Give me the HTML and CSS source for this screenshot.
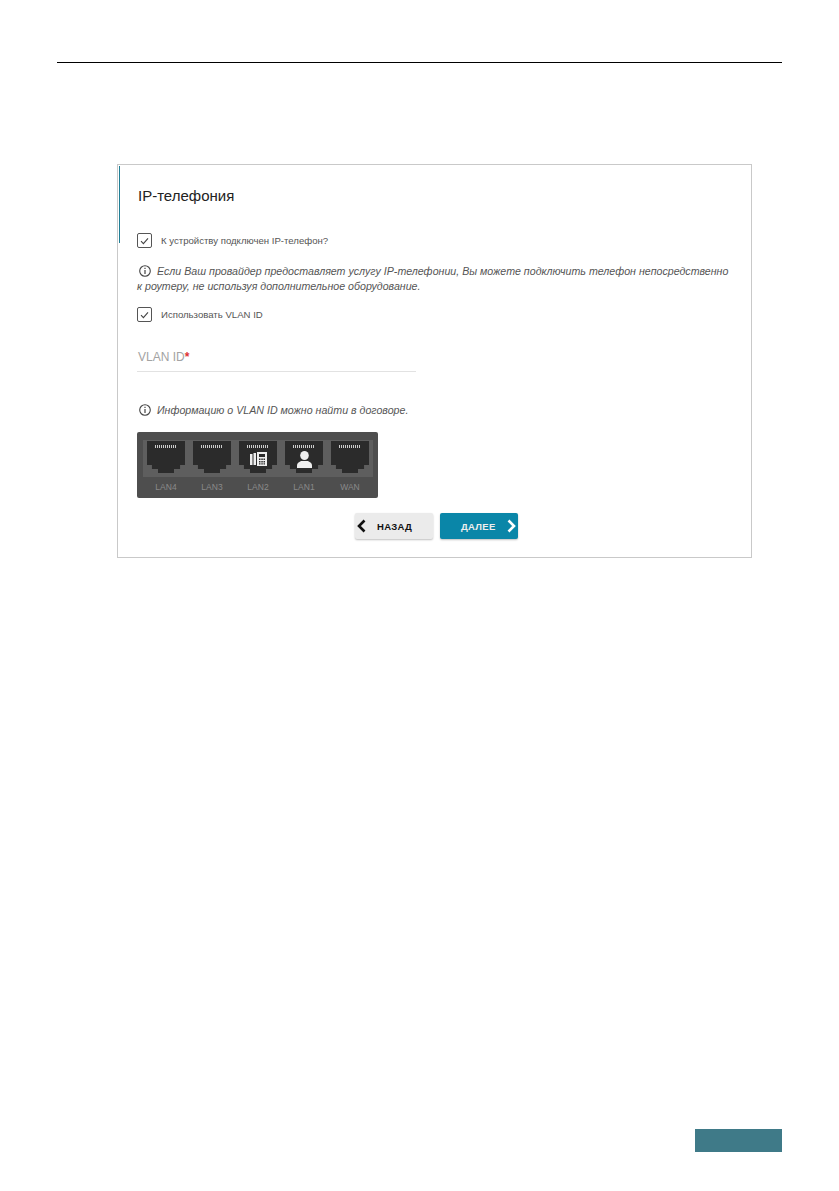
FILE: index.html
```html
<!DOCTYPE html>
<html lang="ru">
<head>
<meta charset="UTF-8" />
<title>IP-телефония</title>
<link rel="stylesheet" href="styles.css">
</head>
<body>
<div class="page">
  <div class="top-rule"></div>
  <div class="frame">
    <h1>IP-телефония</h1>
    <label class="check check-first">
      <span class="box"><svg width="9" height="8" viewBox="0 0 9 8"><path d="M1 4.2 3.4 6.6 8 1.4" fill="none" stroke="#444" stroke-width="1.1"/></svg></span>
      <span>К устройству подключен IP-телефон?</span>
    </label>
    <p class="note note-wide">
      <svg class="info" width="12" height="12" viewBox="0 0 12 12"><circle cx="6" cy="6" r="5.300" fill="none" stroke="#444" stroke-width="1.100"/><path d="M6 5v4M6 2.700V4" stroke="#444" stroke-width="1.200"/></svg>
      Если Ваш провайдер предоставляет услугу IP-телефонии, Вы можете подключить телефон непосредственно к роутеру, не используя дополнительное оборудование.
    </p>
    <label class="check check-second">
      <span class="box"><svg width="9" height="8" viewBox="0 0 9 8"><path d="M1 4.2 3.4 6.6 8 1.4" fill="none" stroke="#444" stroke-width="1.1"/></svg></span>
      <span>Использовать VLAN ID</span>
    </label>
    <div class="field">VLAN ID<span class="req">*</span></div>
    <p class="note note-vlan">
      <svg class="info" width="12" height="12" viewBox="0 0 12 12"><circle cx="6" cy="6" r="5.300" fill="none" stroke="#444" stroke-width="1.100"/><path d="M6 5v4M6 2.700V4" stroke="#444" stroke-width="1.200"/></svg>
      Информацию о VLAN ID можно найти в договоре.
    </p>
    <div class="ports">
      <div class="port-row">
        <div class="port"><div class="socket"><span class="pins"></span></div><span class="port-name">LAN4</span></div>
        <div class="port"><div class="socket"><span class="pins"></span></div><span class="port-name">LAN3</span></div>
        <div class="port">
          <div class="socket"><span class="pins"></span>
            <svg class="port-icon phone" width="17" height="14" viewBox="0 0 17 14"><path d="M0 2h2.500v11H0zM3.500 1H6v12H3.500z" fill="#eee"/><path d="M7 0h10v14H7z" fill="#eee"/><path d="M9 2h6v3H9zM9 6.500h1.500V8H9zM11.300 6.500h1.500V8h-1.500zM13.500 6.500H15V8h-1.500zM9 9h1.500v1.500H9zM11.300 9h1.500v1.500h-1.500zM13.500 9H15v1.500h-1.500zM9 11.300h1.500v1.200H9zM11.300 11.300h1.500v1.200h-1.500zM13.500 11.300H15v1.200h-1.500z" fill="#2b2b2b"/></svg>
          </div>
          <span class="port-name">LAN2</span>
        </div>
        <div class="port">
          <div class="socket"><span class="pins"></span>
            <svg class="port-icon" width="15" height="17" viewBox="0 0 15 17"><ellipse cx="7.500" cy="4.500" rx="4.300" ry="4.500" fill="#eee"/><path d="M0 17v-2.500C0 11.500 3.500 10 5 10h5c1.500 0 5 1.500 5 4.500V17z" fill="#eee"/></svg>
          </div>
          <span class="port-name">LAN1</span>
        </div>
        <div class="port"><div class="socket"><span class="pins"></span></div><span class="port-name">WAN</span></div>
      </div>
    </div>
    <div class="actions">
      <button class="btn btn-back">
        <svg width="9" height="14" viewBox="0 0 9 14"><path d="M7.500 1.500 2 7l5.500 5.500" fill="none" stroke="#111" stroke-width="2.600"/></svg>
        <span>НАЗАД</span>
      </button>
      <button class="btn btn-next">
        <span>ДАЛЕЕ</span>
        <svg width="9" height="14" viewBox="0 0 9 14"><path d="M1.500 1.500 7 7l-5.500 5.500" fill="none" stroke="#fff" stroke-width="2.600"/></svg>
      </button>
    </div>
  </div>
  <div class="footer-box"></div>
</div>
</body>
</html>
```

FILE: styles.css
```css
* { box-sizing: border-box; }
body {
  margin: 0;
  background: #fff;
  font-family: 'Liberation Sans', Arial, sans-serif;
  color: #444;
}
.page {
  height: 1191px;
  padding: 62px 57px 0 57px;
  display: flex;
  flex-direction: column;
}
.top-rule {
  height: 1px;
  background: #000;
}
.frame {
  position: relative;
  width: 635px;
  height: 394px;
  margin: 101px 0 0 60px;
  padding: 0 19px;
  border: 1px solid #c9c9c9;
}
/* teal accent next to the title */
.frame::before {
  content: "";
  position: absolute;
  left: 1px;
  top: 1px;
  width: 1px;
  height: 77px;
  background: #1f7f96;
}
h1 {
  margin: 22px 0 0 1px;
  font-size: 15px;
  line-height: 18px;
  font-weight: 400;
  color: #222;
}
.check {
  display: flex;
  align-items: center;
  gap: 9px;
  font-size: 9.6px;
  line-height: 15px;
  color: #555;
}
.check-first { margin-top: 28px; }
.check-second { margin-top: 13px; }
.box {
  display: flex;
  align-items: center;
  justify-content: center;
  width: 15px;
  height: 15px;
  border: 1px solid #555;
  border-radius: 2px;
}
.note {
  margin: 0;
  font-size: 10.65px;
  line-height: 15px;
  font-style: italic;
  color: #555;
}
.note-wide { margin-top: 16px; width: 594px; }
.note-vlan { margin-top: 31px; }
.info {
  vertical-align: -2px;
  margin: 0 3px 0 2px;
}
.field {
  width: 279px;
  height: 23px;
  margin-top: 27px;
  padding-left: 1px;
  font-size: 12px;
  line-height: 16px;
  color: #a3a3a3;
  border-bottom: 1px solid #e2e2e2;
}
.req { color: #d33; font-weight: 700; }
.ports {
  width: 241px;
  height: 66px;
  margin-top: 14px;
  padding: 8px 5px 0 6px;
  background: #4e4e4e;
  border-radius: 2px;
}
.port-row {
  display: flex;
  justify-content: space-between;
  padding: 1px 4px 0 4px;
  background: linear-gradient(#5e5e5e 37px, transparent 37px);
}
.port {
  width: 38px;
  display: flex;
  flex-direction: column;
  align-items: center;
}
.socket {
  position: relative;
  width: 38px;
  height: 32px;
  display: flex;
  justify-content: center;
  align-items: flex-start;
  padding-top: 10px;
  background: #2b2b2b;
  clip-path: polygon(0 0, 100% 0, 100% 75%, 87% 75%, 87% 87.500%, 71% 87.500%, 71% 100%, 29% 100%, 29% 87.500%, 13% 87.500%, 13% 75%, 0 75%);
}
.phone { margin-top: 1px; }
.pins {
  position: absolute;
  top: 4px;
  left: 8px;
  width: 22px;
  height: 3px;
  background: repeating-linear-gradient(90deg, #ccc 0 1px, transparent 1px 2px);
}
.port-name {
  margin-top: 9px;
  font-size: 8.500px;
  line-height: 10px;
  color: #8a8a8a;
}
.actions {
  display: flex;
  justify-content: center;
  gap: 7px;
  margin: 15px 0 0 0;
  padding-left: 4px;
}
.btn {
  display: flex;
  align-items: center;
  width: 78px;
  height: 26px;
  padding: 0 2px;
  border: none;
  border-radius: 2px;
  font-family: 'Liberation Sans', Arial, sans-serif;
  font-size: 9.5px;
  font-weight: 700;
  letter-spacing: 0.3px;
  box-shadow: 0 1px 2px rgba(0,0,0,0.25);
}
.btn-back {
  background: #ebebeb;
  color: #111;
  gap: 11px;
}
.btn-next {
  background: #0a86a8;
  color: #eee;
  justify-content: space-between;
  padding-left: 21px;
}
.footer-box {
  width: 87px;
  height: 23px;
  margin: auto 0 39px auto;
  background: #3f7a88;
}
```
